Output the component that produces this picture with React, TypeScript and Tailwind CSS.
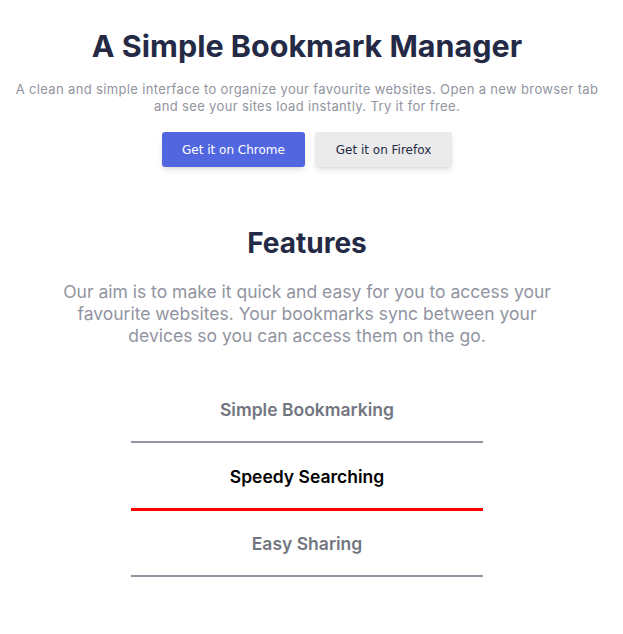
import { useState } from 'react';

const tabs = ['Simple Bookmarking', 'Speedy Searching', 'Easy Sharing'];

export default function App() {
  const [active, setActive] = useState(1);

  return (
    <div className="w-[614px] bg-white pt-[28px] text-center font-['Inter',sans-serif]">
      <h1 className="text-[30.5px] font-bold leading-[36px] text-[#242a45]">A Simple Bookmark Manager</h1>
      <p className="mx-auto mt-[17px] max-w-[590px] text-[13px] leading-[17px] tracking-[0.35px] text-[#9194a1]">
        A clean and simple interface to organize your favourite websites. Open a new browser tab and see your sites
        load instantly. Try it for free.
      </p>
      <div className="mt-[17px] flex justify-center gap-[10px] font-['DejaVu_Sans',sans-serif] text-[12px]">
        <button className="h-[35px] w-[143px] rounded-[3px] bg-[#5267df] text-white shadow-md">Get it on Chrome</button>
        <button className="h-[35px] w-[137px] rounded-[3px] bg-[#ebebeb] text-[#242a45] shadow-md">
          Get it on Firefox
        </button>
      </div>

      <h2 className="mt-[60px] text-[28px] font-bold leading-[32px] text-[#242a45]">Features</h2>
      <p className="mx-auto mt-[22px] max-w-[500px] text-[17.5px] leading-[22px] text-[#9194a1]">
        Our aim is to make it quick and easy for you to access your favourite websites. Your bookmarks sync between
        your devices so you can access them on the go.
      </p>

      <div className="mx-auto mt-[29px] w-[352px]">
        {tabs.map((tab, i) => (
          <button
            key={tab}
            onClick={() => setActive(i)}
            className={`block h-[67px] w-full border-b-2 pt-[3px] text-[17.5px] font-semibold ${
              i === active
                ? 'border-[#ff0000] text-black shadow-[0_1px_0_#ff0000]'
                : 'border-[#9194a1] text-[#737680]'
            }`}
          >
            {tab}
          </button>
        ))}
      </div>
    </div>
  );
}
